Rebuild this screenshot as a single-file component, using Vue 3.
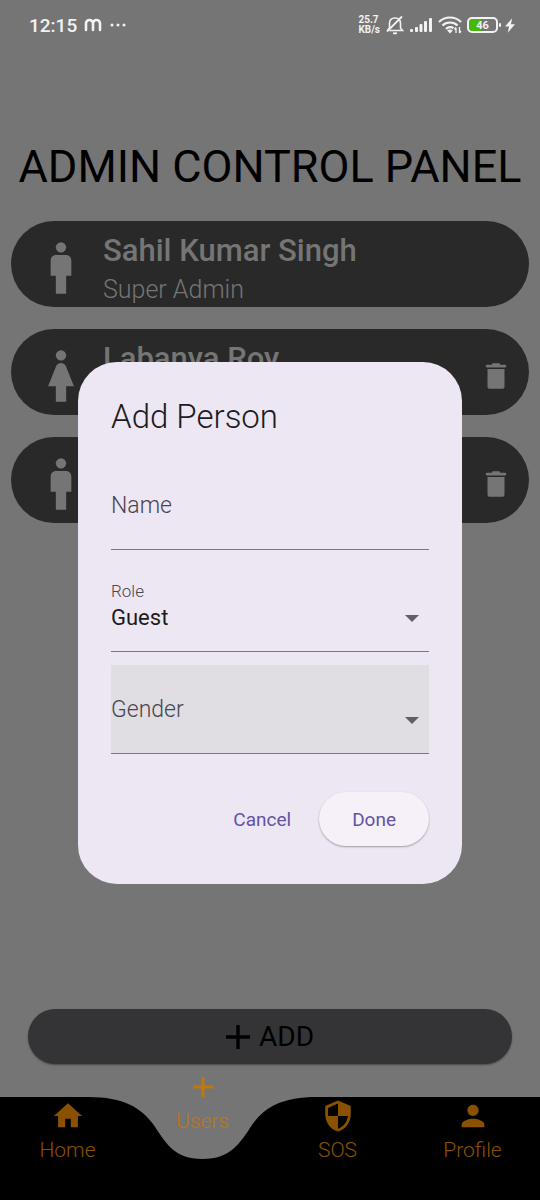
<script setup>
import { ref } from 'vue'

const people = [
  { id: 1, name: 'Sahil Kumar Singh', role: 'Super Admin', figure: 'man', removable: false },
  { id: 2, name: 'Labanya Roy', role: '', figure: 'woman', removable: true },
  { id: 3, name: '', role: '', figure: 'man', removable: true }
]

const figures = {
  man: 'M14 7h-4c-1.100 0-2 .9-2 2v6h2v7h4v-7h2V9c0-1.100-.9-2-2-2z',
  woman: 'M13.940 8.310C13.620 7.520 12.850 7 12 7s-1.620.52-1.940 1.310L7 16h3v6h4v-6h3l-3.060-7.690z'
}

const tabs = [
  { label: 'Home', icon: 'M10 20v-6h4v6h5v-8h3L12 3 2 12h3v8z' },
  { label: 'Users', icon: 'M19 13h-6v6h-2v-6H5v-2h6V5h2v6h6v2z', active: true },
  {
    label: 'SOS',
    icon: 'M12 1L3 5v6c0 5.55 3.84 10.74 9 12 5.16-1.26 9-6.45 9-12V5l-9-4zm0 10.99h7c-.53 4.12-3.28 7.79-7 8.94V12H5V6.3l7-3.11v8.8z'
  },
  {
    label: 'Profile',
    icon: 'M12 12c2.21 0 4-1.79 4-4s-1.79-4-4-4-4 1.79-4 4 1.79 4 4 4zm0 2c-2.67 0-8 1.34-8 4v2h16v-2c0-2.66-5.33-4-8-4z'
  }
]

const name = ref('')
const role = ref('Guest')
const gender = ref('')
</script>

<template>
  <div class="screen">
    <header class="status">
      <span class="clock">12:15</span>
      <svg class="brand" width="18" height="14" viewBox="0 0 18 14" fill="none" stroke="currentColor" stroke-width="2.6" stroke-linecap="round">
        <path d="M2 12V5.500a3.500 3.500 0 0 1 7 0V12M9 5.500a3.500 3.500 0 0 1 7 0V12" />
      </svg>
      <svg width="18" height="4" viewBox="0 0 18 4" fill="currentColor">
        <circle cx="3" cy="2" r="1.5" /><circle cx="9" cy="2" r="1.5" /><circle cx="15" cy="2" r="1.5" />
      </svg>
      <div class="indicators">
        <span class="speed">25.7<br />KB/s</span>
        <svg width="20" height="20" viewBox="0 0 20 20" fill="none" stroke="currentColor" stroke-width="1.6">
          <path d="M4.500 13V8.500C4.500 5 6.500 3 10 3c3.500 0 5.500 2 5.500 5.500V13l2 2.500H4.500M4.500 13l-2 2.500" />
          <path d="M17 1.500L2 16.500" stroke-width="1.800" />
          <path d="M8 18.300h4" stroke-width="1.800" />
        </svg>
        <svg width="23" height="16" viewBox="0 0 23 16" fill="currentColor">
          <rect x="0" y="12" width="3" height="3" rx="1" /><rect x="5" y="10" width="3" height="5" rx="1" />
          <rect x="9.500" y="7" width="3" height="8" rx="1" /><rect x="14" y="4" width="3" height="11" rx="1" />
          <rect x="19" y="1" width="3" height="14" rx="1" />
        </svg>
        <svg width="24" height="18" viewBox="0 0 24 18" fill="none" stroke="currentColor" stroke-width="2.200">
          <path d="M1 6C7 0 17 0 23 6M4.500 9.500c4-4 11-4 15 0M8 13c2-2.200 5.500-2.400 7.500-.8" />
          <path d="M12 17.500l-2.800-3c1.600-1.300 4-1.300 5.600 0z" fill="currentColor" stroke="none" />
          <path d="M18 17v-5M21.500 11v6M16.500 13.500l1.500-2M21.500 17l1.500-2" stroke-width="1.300" />
        </svg>
        <span class="battery"><span class="level">46</span></span>
        <svg width="10" height="15" viewBox="0 0 11 16" fill="currentColor"><path d="M8 0L0 9h4.500L3 16l8-9.500H6.500z" /></svg>
      </div>
    </header>

    <main class="content">
      <h1>ADMIN CONTROL PANEL</h1>
      <ul class="people">
        <li v-for="person in people" :key="person.id" class="person">
          <svg class="figure" viewBox="0 0 24 24" fill="currentColor">
            <circle cx="12" cy="4" r="2" />
            <path :d="figures[person.figure]" />
          </svg>
          <div class="who">
            <strong>{{ person.name }}</strong>
            <span>{{ person.role }}</span>
          </div>
          <button v-if="person.removable" class="remove" type="button" aria-label="Delete">
            <svg viewBox="0 0 24 24" fill="currentColor">
              <path d="M6 7h12v12.500c0 .8-.7 1.500-1.500 1.500h-9C6.700 21 6 20.300 6 19.500z" />
              <path d="M5.700 4H9c.3-.7.600-1 1.200-1h3.600c.6 0 .9.300 1.200 1h3.300a1 1 0 0 1 0 2H5.700a1 1 0 0 1 0-2z" />
            </svg>
          </button>
        </li>
      </ul>
      <button class="add" type="button">
        <svg viewBox="0 0 24 24" fill="none" stroke="currentColor" stroke-width="3.400"><path d="M12 0v24M0 12h24" /></svg>
        ADD
      </button>
    </main>

    <nav class="tabs">
      <svg class="bar" viewBox="0 0 540 103" preserveAspectRatio="none">
        <path d="M0 0H88C124 0 141 11 153 27C166 46 174 62 202.500 62C231 62 240 46 252 28C264 11 281 0 317 0H540V103H0z" />
      </svg>
      <a v-for="tab in tabs" :key="tab.label" href="#" class="tab" :class="{ active: tab.active }">
        <svg viewBox="0 0 24 24" fill="currentColor"><path :d="tab.icon" /></svg>
        <span>{{ tab.label }}</span>
      </a>
    </nav>

    <div class="overlay">
      <form class="dialog" role="dialog" aria-labelledby="dialog-title" @submit.prevent>
        <h2 id="dialog-title">Add Person</h2>
        <div class="fields">
          <div class="field">
            <label for="name">Name</label>
            <input id="name" v-model="name" type="text" />
          </div>
          <div class="field filled">
            <label for="role">Role</label>
            <select id="role" v-model="role">
              <option>Guest</option>
            </select>
            <svg class="arrow" viewBox="0 0 14 7"><path d="M0 0h14L7 7z" /></svg>
          </div>
          <div class="field focused">
            <label for="gender">Gender</label>
            <select id="gender" v-model="gender">
              <option value=""></option>
            </select>
            <svg class="arrow" viewBox="0 0 14 7"><path d="M0 0h14L7 7z" /></svg>
          </div>
        </div>
        <div class="actions">
          <button type="button" class="cancel">Cancel</button>
          <button type="submit" class="done">Done</button>
        </div>
      </form>
    </div>
  </div>
</template>

<style>
body {
  margin: 0;
  background: #757575;
}
</style>

<style scoped>
.screen {
  position: relative;
  display: flex;
  flex-direction: column;
  min-height: 100vh;
  background: #757575;
  font-family: Roboto, "Liberation Sans", sans-serif;
  font-weight: 300;
}

button,
input,
select {
  margin: 0;
  border: 0;
  padding: 0;
  background: none;
  font: inherit;
  color: inherit;
}

svg {
  display: block;
  flex: none;
}

.status {
  display: flex;
  align-items: center;
  gap: 7px;
  height: 50px;
  padding: 0 25px 0 29px;
  color: #f2f2f2;
}

.clock {
  font-size: 19px;
  font-weight: 500;
}

.indicators {
  display: flex;
  align-items: center;
  gap: 5px;
  margin-left: auto;
}

.speed {
  font-size: 10px;
  line-height: 10px;
  font-weight: 700;
}

.battery {
  position: relative;
  box-sizing: border-box;
  width: 31px;
  height: 16px;
  border: 2px solid #f2f2f2;
  border-radius: 5px;
  background: linear-gradient(90deg, #45b80c 46%, transparent 46%);
  margin-right: 2px;
}

.battery::after {
  content: "";
  position: absolute;
  top: 4px;
  right: -5px;
  width: 2px;
  height: 4px;
  border-radius: 1px;
  background: #f2f2f2;
}

.level {
  display: block;
  text-align: center;
  font-size: 11px;
  line-height: 13px;
  font-weight: 700;
}

.content {
  flex: 1;
  display: flex;
  flex-direction: column;
  padding: 89px 11px 33px;
}

h1 {
  display: flex;
  justify-content: center;
  margin: 0 0 26px;
  white-space: nowrap;
  font-size: 45px;
  line-height: 56px;
  font-weight: 400;
  color: #000;
}

.people {
  display: grid;
  gap: 22px;
  margin: 0;
  padding: 0;
  list-style: none;
}

.person {
  display: flex;
  align-items: center;
  box-sizing: border-box;
  height: 86px;
  padding: 8px 16px 0 19px;
  border-radius: 43px;
  background: #292929;
  color: #757575;
}

.figure {
  width: 62px;
  height: 62px;
}

.who {
  flex: 1;
  align-self: flex-start;
  display: grid;
  grid-template-rows: 42px 36px;
  align-items: center;
  padding-left: 11px;
}

.who strong {
  font-size: 31px;
  font-weight: 500;
}

.who span {
  font-size: 25px;
}

.remove {
  cursor: pointer;
}

.remove svg {
  width: 34px;
  height: 34px;
}

.add {
  display: flex;
  align-items: center;
  justify-content: center;
  gap: 9px;
  height: 55px;
  margin: auto 17px 0;
  border-radius: 28px;
  background: #343436;
  box-shadow: 0 1px 2px #00000066;
  font-size: 28px;
  font-weight: 400;
  color: #000;
}

.add svg {
  width: 24px;
  height: 24px;
}

.tabs {
  position: relative;
  display: grid;
  grid-template-columns: repeat(4, 1fr);
  height: 103px;
}

.bar {
  position: absolute;
  inset: 0;
  width: 100%;
  height: 100%;
}

.tab {
  position: relative;
  display: flex;
  flex-direction: column;
  align-items: center;
  gap: 3px;
  padding-top: 2px;
  text-decoration: none;
  font-size: 21px;
  line-height: 28px;
  color: #8a5200;
}

.tab svg {
  width: 34px;
  height: 34px;
}

.tab.active {
  margin-top: -29px;
  color: #c07808;
}

.tab.active svg {
  width: 36px;
  height: 34px;
}

.overlay {
  position: absolute;
  inset: 0;
  display: grid;
  place-items: center;
  padding: 46px 78px 0;
}

.dialog {
  box-sizing: border-box;
  width: 100%;
  padding: 33px 33px 38px;
  border-radius: 39px;
  background: #ede7f3;
  color: #1d1b20;
}

h2 {
  margin: 0 0 22px;
  font-size: 33px;
  line-height: 44px;
  font-weight: 300;
}

.fields {
  display: grid;
  gap: 13px;
}

.field {
  display: grid;
  align-items: center;
  height: 88px;
  border-bottom: 1px solid #7b7680;
  font-size: 23px;
}

.field > * {
  grid-area: 1 / 1;
}

.field label {
  pointer-events: none;
  color: #49454f;
}

.field input,
.field select {
  box-sizing: border-box;
  width: 100%;
  height: 88px;
  padding-top: 20px;
  outline: none;
  appearance: none;
  font-size: 22px;
  font-weight: 400;
}

.field.filled label {
  align-self: start;
  padding-top: 18px;
  font-size: 17px;
  line-height: 20px;
}

.focused {
  background: #e0dde3;
}

.arrow {
  justify-self: end;
  width: 14px;
  height: 7px;
  padding: 23px 10px 0 0;
  fill: #625e66;
  pointer-events: none;
}

.actions {
  display: flex;
  justify-content: flex-end;
  gap: 11px;
  padding-top: 38px;
}

.actions button {
  height: 54px;
  border-radius: 27px;
  font-size: 19px;
  font-weight: 400;
  color: #6353a0;
}

.cancel {
  padding: 0 17px;
}

.done {
  padding: 0 33px;
  background: #f6f1f9;
  box-shadow: 0 1px 2px #00000055;
}
</style>
